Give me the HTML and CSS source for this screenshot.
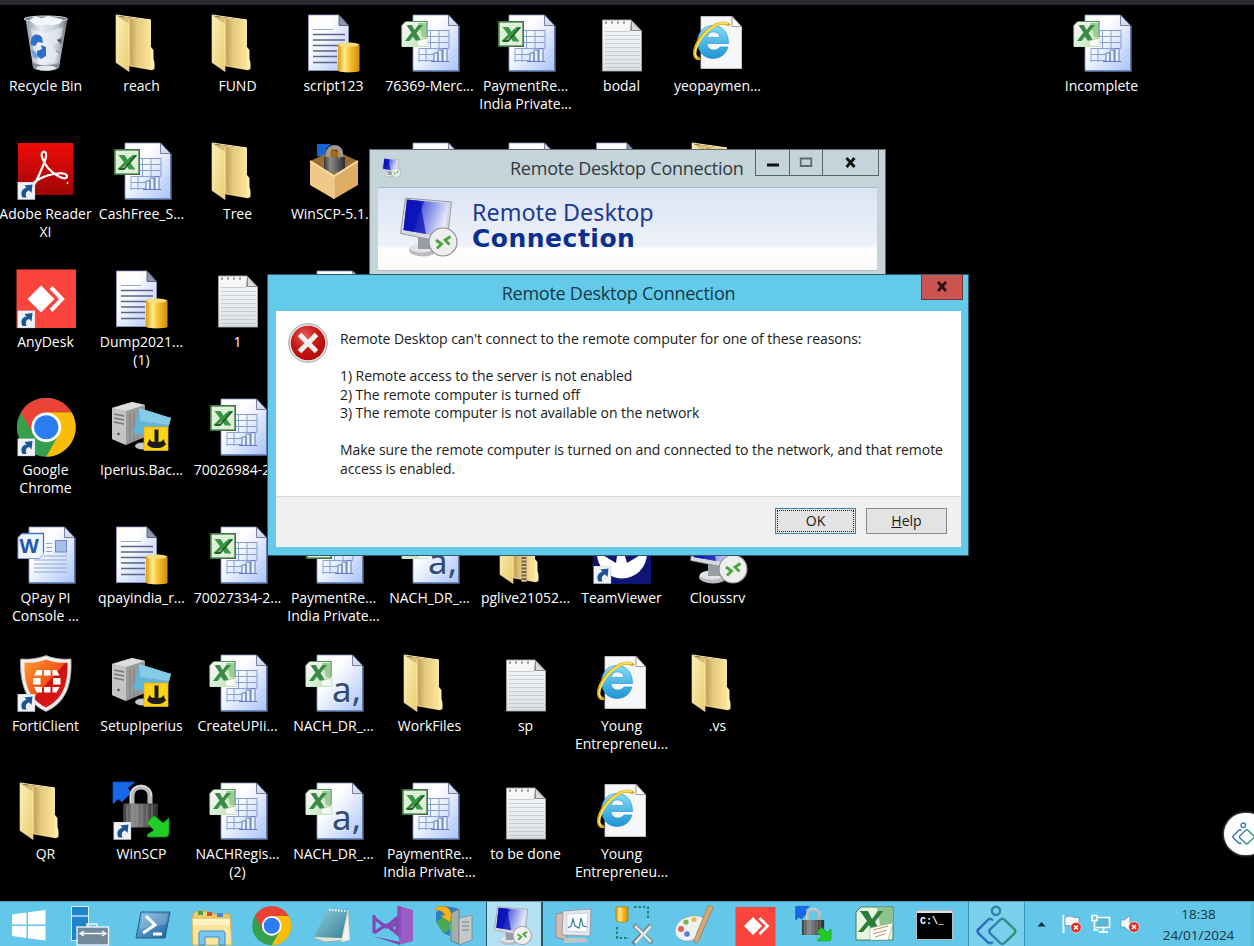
FILE: index.html
```html
<!DOCTYPE html>
<html lang="en">
<head>
<meta charset="utf-8">
<title>Remote Desktop Connection</title>
<link rel="stylesheet" href="styles.css">
</head>
<body>
<svg class="defs" aria-hidden="true">
  <defs>
    <linearGradient id="gPage" x1="0" y1="0" x2="1" y2="1"><stop offset=".35" stop-color="#fdfdff"/><stop offset="1" stop-color="#a9c4f3"/></linearGradient>
    <linearGradient id="gPaper" x1="0" y1="0" x2="0" y2="1"><stop offset="0" stop-color="#fafafa"/><stop offset="1" stop-color="#dcdfe3"/></linearGradient>
    <linearGradient id="gGold" x1="0" y1="0" x2="1" y2="0"><stop offset="0" stop-color="#e09a12"/><stop offset=".3" stop-color="#ffe98c"/><stop offset=".6" stop-color="#f8ba25"/><stop offset="1" stop-color="#d08c08"/></linearGradient>
    <linearGradient id="gFoldA" x1="0" y1="0" x2="1" y2="1"><stop offset="0" stop-color="#fdf0b6"/><stop offset="1" stop-color="#ecce76"/></linearGradient>
    <linearGradient id="gFoldB" x1="0" y1="0" x2="1" y2="0"><stop offset="0" stop-color="#c2a257"/><stop offset=".35" stop-color="#e5ca80"/><stop offset="1" stop-color="#f9e698"/></linearGradient>
    <linearGradient id="gRed" x1="0" y1="0" x2="0" y2="1"><stop offset="0" stop-color="#f00c08"/><stop offset="1" stop-color="#9d0505"/></linearGradient>
    <linearGradient id="gOrange" x1="0" y1="0" x2="1" y2="1"><stop offset="0" stop-color="#ff9b2e"/><stop offset=".5" stop-color="#f2541b"/><stop offset=".52" stop-color="#cf1010"/><stop offset="1" stop-color="#e02018"/></linearGradient>
    <linearGradient id="gScreen" x1="0" y1="0" x2="1" y2=".3"><stop offset="0" stop-color="#0f14a8"/><stop offset=".42" stop-color="#1b27d2"/><stop offset=".45" stop-color="#5b69de"/><stop offset="1" stop-color="#e6eafc"/></linearGradient>
    <linearGradient id="gBody" x1="0" y1="0" x2="1" y2="0"><stop offset="0" stop-color="#3a3a3a"/><stop offset=".3" stop-color="#8a8a8a"/><stop offset="1" stop-color="#2c2c2c"/></linearGradient>
    <linearGradient id="gIe" x1="0" y1="0" x2="0" y2="1"><stop offset="0" stop-color="#86ddf8"/><stop offset="1" stop-color="#1c93d2"/></linearGradient>
    <linearGradient id="gBadge" x1="0" y1="0" x2="1" y2="1"><stop offset="0" stop-color="#ffffff"/><stop offset="1" stop-color="#b9dcb2"/></linearGradient>
    <linearGradient id="gPs" x1="0" y1="0" x2="1" y2="1"><stop offset="0" stop-color="#7fc0e6"/><stop offset="1" stop-color="#1c5f9d"/></linearGradient>
    <linearGradient id="gBin" x1="0" y1="0" x2="1" y2="0"><stop offset="0" stop-color="#8f98a3"/><stop offset=".35" stop-color="#e9eef4"/><stop offset=".75" stop-color="#c3ccd6"/><stop offset="1" stop-color="#68707a"/></linearGradient>
    <radialGradient id="gErr" cx=".4" cy=".3" r=".75"><stop offset="0" stop-color="#e0645c"/><stop offset=".5" stop-color="#c81818"/><stop offset="1" stop-color="#b00808"/></radialGradient>
    <linearGradient id="gTeal" x1="0" y1="0" x2="1" y2="1"><stop offset="0" stop-color="#8fd0de"/><stop offset="1" stop-color="#3a7f96"/></linearGradient>
    <linearGradient id="gApp" gradientUnits="userSpaceOnUse" x1="0" y1="0" x2="42" y2="0"><stop offset="0" stop-color="#2f5cc4"/><stop offset=".5" stop-color="#2f86a8"/><stop offset="1" stop-color="#2a9a6a"/></linearGradient>
  </defs>

  <symbol id="shortcut" viewBox="0 0 18 18"><rect width="17.5" height="17.5" fill="#eef2f8" stroke="#b9c0ca" stroke-width=".6"/><path d="M5 15.500C2.500 11 4.500 6.500 9 6L7 3.500L15 2.500l-1 8.500-2.300-2.500C9 9 7.500 11 9 15.500z" fill="#1d5592"/></symbol>

  <symbol id="folder" viewBox="0 0 96 66">
    <path d="M23 6L57 10V48L60 50V59L56 60 34 56z" fill="url(#gFoldB)"/>
    <path d="M36 8.500L56.500 11V58.500L36 55z" fill="url(#gFoldB)"/>
    <path d="M22 5L35 14.500V61.500L22 52.500z" fill="url(#gFoldA)" stroke="#f8e8a8" stroke-width=".6"/>
    <path d="M22 5L57 10" stroke="#fff4c8" stroke-width="1.200"/>
    <path d="M57 37l2.500 3v11l1 1v7l-3.500 1.500z" fill="#fbeeb0"/>
  </symbol>
  <symbol id="zip" viewBox="0 0 96 66">
    <use href="#folder"/>
    <path d="M46 9v51" stroke="#80603a" stroke-width="5"/><path d="M46 9v51" stroke="#d8c9a8" stroke-width="5" stroke-dasharray="1.500 2"/>
  </symbol>

  <symbol id="textdoc" viewBox="0 0 96 66">
    <path d="M22.500 5H53l9.500 10.500V60.500h-40z" fill="url(#gPage)" stroke="#8f9ccb" stroke-width=".8"/>
    <path d="M53 5l9.500 10.500H53z" fill="#8b95ab" stroke="#39435c" stroke-width=".7"/>
    <path d="M27 19.500h20" stroke="#9aa3b5"/><path d="M27 24.500h32M27 30h32M27 35.500h31M27 41h24M27 46.500h24M27 52.500h24" stroke="#5a6684" stroke-width="1.300"/>
  </symbol>
  <symbol id="sql" viewBox="0 0 96 66">
    <use href="#textdoc"/>
    <path d="M52 35c0-3.500 21.500-3.500 21.500 0v25.500c0 2.500-21.500 2.500-21.500 0z" fill="url(#gGold)"/><ellipse cx="62.700" cy="34.800" rx="10.200" ry="2" fill="#f9dc86"/>
  </symbol>

  <symbol id="page" viewBox="0 0 96 66">
    <path d="M31 5H66.500L76.500 15.500V60.800H31z" fill="url(#gPage)" stroke="#7f95c8" stroke-width=".8"/>
    <path d="M31 61.300H77.200V16" fill="none" stroke="#46608f" stroke-width="1.200"/>
    <path d="M66.500 5L76.500 15.500h-10z" fill="#dcdcea" stroke="#5d6785" stroke-width=".8"/>
  </symbol>
  <symbol id="sheet" viewBox="0 0 96 66">
    <use href="#page"/>
    <path d="M45 20.500h22M45 26.500h22M45 32.500h22M37 38.500h30M37 44.500h18M37 50.500h18M37 38v14M44 38v14M48.500 20v18M57 20v18M67 20v18" fill="none" stroke="#86a0d2" stroke-width="1"/>
    <path d="M52 51V43h4v8M56 51V40h4v11M61 51V38.500h4V51M49 51.500h18" fill="#e9effc" stroke="#5f7cba" stroke-width="1"/>
  </symbol>
  <symbol id="xOld" viewBox="0 0 96 66">
    <rect x="20.800" y="11.800" width="24.400" height="24.400" fill="#dff0da" stroke="#3d7540" stroke-width="1.600"/>
    <path d="M24.500 17h6l3 4.500 5-4.500h5l-8 7 6 7.500h-6.500l-3-4.500-5 4.500h-4l7-7z" fill="#3b9444"/><path d="M25 31h5L42 17.500" stroke="#1d5f27" stroke-width="1.800" fill="none"/>
  </symbol>
  <symbol id="xNew" viewBox="0 0 96 66">
    <path d="M24 11.500H45V31l-4 5.500H20V15.500z" fill="url(#gBadge)" stroke="#cfe6ca" stroke-width="1"/>
    <path d="M24 11.500H45V27" fill="none" stroke="#4d9455" stroke-width="1.200"/>
    <path d="M36 13h8v16l-4-3z" fill="#9ccb9a"/>
    <path d="M24.500 15h5.500l2.500 5 4-5h4.500l-6.500 8 4.500 7.500h-5.500L31 26.500 27.500 31H23l6.500-8.500z" fill="#3b8c42"/>
    <path d="M34 32.500c4-3.500 7-3 12-4v8H37z" fill="#f4faf2" stroke="#b3d3ae" stroke-width=".6"/>
  </symbol>
  <symbol id="xlsOld" viewBox="0 0 96 66"><use href="#sheet"/><use href="#xOld"/></symbol>
  <symbol id="xlsNew" viewBox="0 0 96 66"><use href="#sheet"/><use href="#xNew"/></symbol>
  <symbol id="wordBase" viewBox="0 0 96 66">
    <use href="#page"/>
    <path d="M48 21.500h6M48 25.500h6M48 29.500h6M36 38h33M36 42h33M36 46h33M36 50h33M46 34h23" stroke="#8ca6d8" stroke-width="1"/><rect x="57.500" y="18.500" width="11" height="11.500" fill="#a9bee8" stroke="#6d8ac6"/>
    <path d="M24 11.500H45.500V32l-4 4.500H20V15.500z" fill="#f1f6fd" stroke="#7fa3d8"/>
    <path d="M24 11.500H45.500V30" fill="none" stroke="#3e76c0" stroke-width="1.300"/>
  </symbol>

  <symbol id="notepad" viewBox="0 0 96 66">
    <path d="M28.500 10H57L67.500 21V61h-39z" fill="url(#gPaper)" stroke="#a3a6aa" stroke-width=".9"/>
    <path d="M57 10L67.500 21H56z" fill="#8b8e92"/><path d="M58 11.500V20h8z" fill="#d7d9db"/>
    <path d="M31 25.500h35M31 29.500h35M31 33.500h35M31 37.500h35M31 41.500h35M31 45.500h35M31 49.500h35M31 53.500h35M31 57.500h35M31 21.500h25" stroke="#c3c8ce" stroke-width=".9"/>
    <path d="M31 12.500h24" stroke="#999" stroke-width="2.400" stroke-dasharray="2 4"/>
  </symbol>

  <symbol id="ie" viewBox="0 0 96 66">
    <path d="M31 6.500H62l9.500 10V58.500H31z" fill="#f6f7f9" stroke="#d4d6da" stroke-width=".8"/><path d="M62 6.500l9.500 10H62z" fill="#fff" stroke="#8d9095" stroke-width=".9"/>
    <path d="M43 15.500c9 0 15.500 6.500 15.500 18H37c.5 4 3 6.500 7 6.500 2.500 0 4.500-1 6-3h8c-2 7-7.500 11.500-15 11.500-9 0-15.500-6.500-15.500-16.500S34 15.500 43 15.500zM37.500 27.500h12.500c-.5-3.500-2.500-5.500-6.500-5.500s-5.500 2-6 5.500z" fill="url(#gIe)" stroke="#1f93cf" stroke-width=".6"/>
    <path d="M30 48.500C21 50 23 34 37 21 46 13 56 11 59.500 15.500" fill="none" stroke="#dca818" stroke-width="3.200"/><path d="M27 47.500C22.500 44 28 30 38 20.500 46 13.500 54 11.500 58 14" fill="none" stroke="#ffe25a" stroke-width="1.800"/>
  </symbol>

  <symbol id="bin" viewBox="0 0 96 66">
    <path d="M27.500 9L35 57c2 5 24 5 26 0L69.500 9z" fill="url(#gBin)"/>
    <path d="M26 9c2-4 42-4 43.500 0-2 3.500-42 3.500-43.500 0z" fill="#6f7781" stroke="#d8dee5"/>
    <path d="M31 10l6-3.500 7 1.500 6-2 7 1.500 8 2-3 4-8 2-8-1-8 1z" fill="#f4f6f9"/>
    <path d="M35 57c2 5 24 5 26 0l.8-5c-4 4-24 4-27.500 0z" fill="#858e98"/><ellipse cx="48" cy="58" rx="10" ry="2.500" fill="#e4e8ec"/>
    <path d="M33 19l14 4 18-6-3 15-7 4 5 8-4 9-14 2-5-9z" fill="#f2f6fa" opacity=".55"/><path d="M64 28l-5 2 4 4zM58 41l4 2" fill="#4b535d" stroke="#7c8590"/>
    <path d="M33 35c-1-8 3-12 8-10l3 2 1 6-5-1-3 4zM39 41l5-2-1-4 5 2v9l-5 3-4-3z" fill="#2f6fcc"/><path d="M35 47l-2-8 5 3 2 7z" fill="#6fa1e2"/>
  </symbol>

  <symbol id="adobe" viewBox="0 0 96 66">
    <rect x="20" y="5" width="55" height="52" fill="url(#gRed)"/>
    <path d="M34 51c-4-1 1-8 14-13 14-4.500 22-3 21 1-2 3.500-12-1-19-9C43 21 42 14 46 13.500c4.500 1 1 10-3 19-4 10-8 16-10 18z" fill="none" stroke="#fff" stroke-width="2.200"/><circle cx="69.500" cy="45" r=".9" fill="#fff"/>
    <use href="#shortcut" x="19.500" y="44" width="18" height="18"/>
  </symbol>

  <symbol id="anydesk" viewBox="0 0 96 66"><rect x="18.500" y="3.500" width="59.500" height="58.500" fill="#fb443b"/><path d="M43 19.500L56.500 33 43 46.500 29.500 33z" fill="#fff"/><path d="M52 21L64 33 52 45" fill="none" stroke="#fb443b" stroke-width="8"/><path d="M53 21.500L64 33 53 44.500" fill="none" stroke="#fff" stroke-width="4"/><use href="#shortcut" x="19.500" y="44.500" width="18" height="18"/></symbol>

  <symbol id="chromeLogo" viewBox="0 0 60 60">
    <circle cx="30" cy="30" r="29.700" fill="#34a04c"/>
    <path d="M4.300 15.200A29.700 29.700 0 0 1 55.700 15.200H30L17.200 37.400z" fill="#ea4335"/>
    <path d="M55.700 15.200A29.700 29.700 0 0 1 30 59.700L42.800 37.400 30 15.200z" fill="#fbbc05"/>
    <circle cx="30" cy="30" r="15" fill="#fff"/><circle cx="30" cy="30" r="12.200" fill="#2b7cf0"/>
  </symbol>
  <symbol id="chrome" viewBox="0 0 96 66"><use href="#chromeLogo" x="18.500" y="3.500" width="59.500" height="59.500"/><use href="#shortcut" x="19.500" y="44.500" width="18" height="18"/></symbol>

  <symbol id="iperius" viewBox="0 0 96 66">
    <path d="M18 14L38 8l13 3v32l-19 8-14-6z" fill="#9a9a9a"/><path d="M18 14l14 3v34l-14-6z" fill="#c4c4c4"/><path d="M18 14L38 8l13 3-19 6z" fill="#dedede"/>
    <path d="M20 20l10 2M20 24l10 2M20 28l10 2" stroke="#777" stroke-width="1.300"/><circle cx="24.500" cy="40" r="1.300" fill="#555"/><path d="M36 20v28M40 19v28M44 18v27" stroke="#7c7c7c" stroke-width=".8"/>
    <path d="M45 14L77 24 71 46 39 39z" fill="#62b4d8"/><path d="M45 14l32 10-2 7-29-4z" fill="#84cbe8"/>
    <ellipse cx="49" cy="52" rx="8" ry="3.500" fill="#c2c7cc"/>
    <rect x="50" y="33" width="24" height="23.500" fill="#fbd31a" stroke="#e0ac10" stroke-width=".8"/><path d="M60.500 35.500h4V48c3 0 4-1 5-3l1 2.500 1.500 3c-3 3-6 3.500-9.500 3.500s-7-.5-9.500-3.500l1.500-3 1-2.500c1 2 2 3 5 3z" fill="#1c1a12"/>
  </symbol>

  <symbol id="winscpBox" viewBox="0 0 96 66">
    <path d="M31 6h14l-5 5v9l-9-2z" fill="#1565d8"/>
    <path d="M24 23L48 12 72 23 48 38z" fill="#9a6d2e"/>
    <path d="M42 21v-6c0-8 13-8 13 0v6" fill="none" stroke="#9b9b9b" stroke-width="4"/><rect x="38" y="19" width="21" height="15" fill="url(#gBody)"/><path d="M44 21v-5c0-6 9-6 9 0v5" fill="none" stroke="#c98f35" stroke-width="1.200"/>
    <path d="M24 23L48 38V61L24 47z" fill="#efc988"/><path d="M72 23L48 38V61L72 47z" fill="#dfae66"/><path d="M24 23L48 38 72 23" fill="none" stroke="#f8dfa9" stroke-width="2"/><path d="M48 38V61" stroke="#f3d193"/>
  </symbol>

  <symbol id="lockArt" viewBox="0 0 60 58">
    <path d="M1 1H23L16 7l3 5-9 9-4-3-5 5z" fill="#1668e8" stroke="#0f4cb4" stroke-width=".8"/>
    <path d="M20 25V15c0-12 18-12 18 0v10" fill="none" stroke="#b8b8b8" stroke-width="5"/><path d="M18.500 25V15c0-13.500 21-13.500 21 0" fill="none" stroke="#e4e4e4" stroke-width="1.200"/>
    <rect x="11" y="22.500" width="35" height="24" rx="1" fill="url(#gBody)"/><path d="M15 24v21M20 24v21M25 24v21M30 24v21M35 24v21M40 24v21" stroke="#aaa" stroke-width=".6"/>
    <path d="M40 36q3-2 5 1l6 5 6-5v15q0 4-4 4H36l-1-2 7-5-7-7z" fill="#22cb26" stroke="#119a18" stroke-width=".8"/>
  </symbol>
  <symbol id="winscp" viewBox="0 0 96 66"><use href="#lockArt" x="18" y="3" width="60" height="58"/><use href="#shortcut" x="19.500" y="44" width="18" height="18"/></symbol>

  <symbol id="forti" viewBox="0 0 96 66">
    <path d="M48 5.500C57 9 65 9.500 73 9 74 33 69 52 48 61.500 27 52 22 33 22.500 9 31 9.500 39 9 48 5.500z" fill="#f3eded" stroke="#a3a3a3" stroke-width=".8"/>
    <path d="M48 9.500C56 12.500 63 13 69.500 12.800 70 33 66 48.500 48 57.500 30 48.500 26 33 26.500 12.800 33 13 40 12.500 48 9.500z" fill="url(#gOrange)"/>
    <g fill="#fff"><path d="M39 20h5v5.500h-8zM46 20h6.500v5.500H46zM54.500 20h4l3 5.500h-7zM35 28h7.500v6.500H35zM55 28h7.500v6.500H55zM36 37h8v5.500h-5zM46 37h6.500v5.500H46zM54.500 37h7l-3 5.500h-4z"/></g>
    <use href="#shortcut" x="19.500" y="44" width="18" height="18"/>
  </symbol>

  <symbol id="teamviewer" viewBox="0 0 96 66">
    <rect x="19" y="4" width="58" height="58" fill="#0e1575"/><circle cx="48" cy="31.500" r="25" fill="#fff"/><path d="M28 29l12-8-1 5h18l-1-5 12 8v3l-15 9-2-7H43l-1 7-15-9z" fill="#0e1575"/><path d="M46 33h5v8h-5z" fill="#fff"/><use href="#shortcut" x="19.500" y="44" width="18" height="18"/>
  </symbol>

  <symbol id="rdpArt" viewBox="0 0 58 61">
    <ellipse cx="23" cy="53" rx="14" ry="6.500" fill="#b9bbc0"/><ellipse cx="22" cy="51" rx="12" ry="4.500" fill="#e3e4e8"/><path d="M18 40l14 3-2 9H18z" fill="#9b9da4"/>
    <path d="M5.500 1L51.500 5 47 46 .500 36.500z" fill="#d7d9df" stroke="#85888f" stroke-width=".8"/>
    <path d="M7 2.500L48.500 6.500 44 40 3.500 33z" fill="url(#gScreen)"/><path d="M7 2.500L20 4 26 37 3.500 33z" fill="#0b12b4" opacity=".75"/>
    <circle cx="43" cy="45" r="14" fill="#eeeeec" stroke="#8f9190" stroke-width="1.200"/><path d="M36 43l5.500 4-4.500 4.500M50.500 39.500l-5.500 3.500 4.500 4.500" fill="none" stroke="#4aa640" stroke-width="2.800"/>
  </symbol>
  <symbol id="rdp" viewBox="0 0 96 66"><use href="#rdpArt" x="20" y="2" width="58" height="61"/></symbol>

  <symbol id="appLogo" viewBox="0 0 42 42">
    <g fill="none" stroke="url(#gApp)" stroke-width="2.500" stroke-linejoin="round" stroke-linecap="round"><circle cx="20.500" cy="6" r="4.200"/><path d="M16.500 38.500Q14.500 40 12.500 38.500L2.500 29Q.800 27 2.500 25L12.500 15Q14.500 13.300 16.500 15"/><path d="M25 15Q27 13.300 29 15L39.500 25Q41.200 27 39.500 29L29 39Q27 40.700 25 39L14.500 29Q12.800 27 14.500 25z"/></g>
  </symbol>
</svg>

<main class="desktop">
  <div class="icons">
    <div class="item c1 r1"><svg><use href="#bin"/></svg><span>Recycle Bin</span></div>
    <div class="item c2 r1"><svg><use href="#folder"/></svg><span>reach</span></div>
    <div class="item c3 r1"><svg><use href="#folder"/></svg><span>FUND</span></div>
    <div class="item c4 r1"><svg><use href="#sql"/></svg><span>script123</span></div>
    <div class="item c5 r1"><svg><use href="#xlsNew"/></svg><span>76369-Merc...</span></div>
    <div class="item c6 r1"><svg><use href="#xlsOld"/></svg><span>PaymentRe...<br>India Private...</span></div>
    <div class="item c7 r1"><svg><use href="#notepad"/></svg><span>bodal</span></div>
    <div class="item c8 r1"><svg><use href="#ie"/></svg><span>yeopaymen...</span></div>
    <div class="item c12 r1"><svg><use href="#xlsNew"/></svg><span>Incomplete</span></div>

    <div class="item c1 r2"><svg><use href="#adobe"/></svg><span>Adobe Reader<br>XI</span></div>
    <div class="item c2 r2"><svg><use href="#xlsOld"/></svg><span>CashFree_S...</span></div>
    <div class="item c3 r2"><svg><use href="#folder"/></svg><span>Tree</span></div>
    <div class="item c4 r2"><svg><use href="#winscpBox"/></svg><span>WinSCP-5.1...</span></div>
    <div class="item c5 r2"><svg><use href="#xlsOld"/></svg></div>
    <div class="item c6 r2"><svg><use href="#xlsOld"/></svg></div>
    <div class="item c7 r2"><svg><use href="#sql"/></svg></div>
    <div class="item c8 r2"><svg><use href="#folder"/></svg></div>

    <div class="item c1 r3"><svg><use href="#anydesk"/></svg><span>AnyDesk</span></div>
    <div class="item c2 r3"><svg><use href="#sql"/></svg><span>Dump2021...<br>(1)</span></div>
    <div class="item c3 r3"><svg><use href="#notepad"/></svg><span>1</span></div>
    <div class="item c4 r3"><svg><use href="#xlsOld"/></svg></div>

    <div class="item c1 r4"><svg><use href="#chrome"/></svg><span>Google<br>Chrome</span></div>
    <div class="item c2 r4"><svg><use href="#iperius"/></svg><span>Iperius.Bac...</span></div>
    <div class="item c3 r4"><svg><use href="#xlsOld"/></svg><span>70026984-2...</span></div>

    <div class="item c1 r5"><svg viewBox="0 0 96 66"><use href="#wordBase"/><text x="21.500" y="31" class="word-w">W</text></svg><span>QPay PI<br>Console ...</span></div>
    <div class="item c2 r5"><svg><use href="#sql"/></svg><span>qpayindia_r...</span></div>
    <div class="item c3 r5"><svg><use href="#xlsOld"/></svg><span>70027334-2...</span></div>
    <div class="item c4 r5"><svg><use href="#xlsOld"/></svg><span>PaymentRe...<br>India Private...</span></div>
    <div class="item c5 r5"><svg viewBox="0 0 96 66"><use href="#page"/><text x="46" y="52" class="csv-a">a,</text><use href="#xNew"/></svg><span>NACH_DR_...</span></div>
    <div class="item c6 r5"><svg><use href="#zip"/></svg><span>pglive21052...</span></div>
    <div class="item c7 r5"><svg><use href="#teamviewer"/></svg><span>TeamViewer</span></div>
    <div class="item c8 r5"><svg><use href="#rdp"/></svg><span>Cloussrv</span></div>

    <div class="item c1 r6"><svg><use href="#forti"/></svg><span>FortiClient</span></div>
    <div class="item c2 r6"><svg><use href="#iperius"/></svg><span>SetupIperius</span></div>
    <div class="item c3 r6"><svg><use href="#xlsNew"/></svg><span>CreateUPIi...</span></div>
    <div class="item c4 r6"><svg viewBox="0 0 96 66"><use href="#page"/><text x="46" y="52" class="csv-a">a,</text><use href="#xNew"/></svg><span>NACH_DR_...</span></div>
    <div class="item c5 r6"><svg><use href="#folder"/></svg><span>WorkFiles</span></div>
    <div class="item c6 r6"><svg><use href="#notepad"/></svg><span>sp</span></div>
    <div class="item c7 r6"><svg><use href="#ie"/></svg><span>Young<br>Entrepreneu...</span></div>
    <div class="item c8 r6"><svg><use href="#folder"/></svg><span>.vs</span></div>

    <div class="item c1 r7"><svg><use href="#folder"/></svg><span>QR</span></div>
    <div class="item c2 r7"><svg><use href="#winscp"/></svg><span>WinSCP</span></div>
    <div class="item c3 r7"><svg><use href="#xlsNew"/></svg><span>NACHRegis...<br>(2)</span></div>
    <div class="item c4 r7"><svg viewBox="0 0 96 66"><use href="#page"/><text x="46" y="52" class="csv-a">a,</text><use href="#xNew"/></svg><span>NACH_DR_...</span></div>
    <div class="item c5 r7"><svg><use href="#xlsOld"/></svg><span>PaymentRe...<br>India Private...</span></div>
    <div class="item c6 r7"><svg><use href="#notepad"/></svg><span>to be done</span></div>
    <div class="item c7 r7"><svg><use href="#ie"/></svg><span>Young<br>Entrepreneu...</span></div>
  </div>

  <section class="window back">
    <header class="bar">
      <svg class="mini" viewBox="0 0 58 61"><use href="#rdpArt"/></svg>
      <h2>Remote Desktop Connection</h2>
      <div class="controls">
        <button aria-label="Minimize"><svg viewBox="0 0 14 12"><path d="M1 8h12" stroke="#111" stroke-width="3"/></svg></button>
        <button aria-label="Maximize"><svg viewBox="0 0 14 12"><path d="M1.700 1.500h10.600v7.500H1.700z" fill="none" stroke="#5f6b70" stroke-width="1.800"/></svg></button>
        <button aria-label="Close"><svg viewBox="0 0 14 12"><path d="M2.500 1l8 9M10.500 1l-8 9" stroke="#111" stroke-width="2.800"/></svg></button>
      </div>
    </header>
    <div class="banner">
      <svg viewBox="0 0 58 61"><use href="#rdpArt"/></svg>
      <div class="brand"><span>Remote Desktop</span><strong>Connection</strong></div>
    </div>
  </section>

  <section class="window alert">
    <header class="bar">
      <h2>Remote Desktop Connection</h2>
      <button class="close" aria-label="Close"><svg viewBox="0 0 14 12"><path d="M3 1l8 9M11 1l-8 9" stroke="#2a0f0f" stroke-width="2.800"/></svg></button>
    </header>
    <div class="content">
      <svg class="error" viewBox="0 0 40 40"><circle cx="20" cy="20" r="19.300" fill="#e6e6e6" stroke="#8e8e8e" stroke-width=".8"/><circle cx="20" cy="20" r="17.300" fill="url(#gErr)"/><path d="M11.500 11.500L28.500 28.500M28.500 11.500L11.500 28.500" stroke="#f4f0ee" stroke-width="5"/></svg>
      <div class="message">
        <p>Remote Desktop can't connect to the remote computer for one of these reasons:</p>
        <p>1) Remote access to the server is not enabled<br>2) The remote computer is turned off<br>3) The remote computer is not available on the network</p>
        <p>Make sure the remote computer is turned on and connected to the network, and that remote<br>access is enabled.</p>
      </div>
    </div>
    <footer>
      <button class="btn default"><span>OK</span></button>
      <button class="btn"><span><u>H</u>elp</span></button>
    </footer>
  </section>

  <div class="bubble"><svg viewBox="0 0 42 42"><use href="#appLogo"/></svg></div>
</main>

<nav class="taskbar">
  <div class="apps">
    <svg viewBox="0 0 60 44"><path d="M12 12.500L26.500 10.500V22.500H12zM28 10.300L45.500 8V22.500H28zM12 24H26.500V36L12 34zM28 24H45.500V38.500L28 36.200z" fill="#fff"/></svg>
    <svg viewBox="0 0 60 44"><path d="M11.500 4.500h17v34h-17z" fill="#1f83c9" stroke="#d8f0fb"/><path d="M12 14h16" stroke="#d8f0fb" stroke-width="1.300"/><path d="M27 25v-3h10v3" fill="none" stroke="#e8f6fc" stroke-width="1.500"/><rect x="17" y="25" width="31.500" height="18" fill="#72889b" stroke="#f2f9fd" stroke-width="1.300"/><path d="M20 31.500h26M24 29l-4 2.500 4 2.500M42 29l4 2.500-4 2.500" fill="none" stroke="#fff" stroke-width="1.300"/></svg>
    <svg viewBox="0 0 60 44"><path d="M20 10h29l-5 26H15z" fill="url(#gPs)" stroke="#245e8d"/><path d="M21 12h26l-2 10-26 5z" fill="#fff" opacity=".18"/><path d="M25 14l9 9-12 8M32 32h9" fill="none" stroke="#fff" stroke-width="3"/></svg>
    <svg viewBox="0 0 60 44"><path d="M12 12l3-3h10l3 3h21v30H12z" fill="#f0cf6b" stroke="#d5a83c"/><path d="M17 9h5v4h-5z" fill="#4c9f49"/><path d="M26 10h5v4h-5z" fill="#d94b3a"/><path d="M36 11h6v4h-6z" fill="#4b86d8"/><path d="M11 16h38l2 27H12z" fill="#fae59a" stroke="#e0b955"/><path d="M12 17h37v6H12z" fill="#fdf3c5"/><path d="M18 43V31q0-2 3-2h20q3 0 3 2v12h-6v-8H24v8z" fill="#79c6f3" stroke="#3a8dcf"/></svg>
    <svg viewBox="0 0 60 44"><use href="#chromeLogo" x="11" y="4" width="39.500" height="39.500"/></svg>
    <svg viewBox="0 0 60 44"><path d="M29 7l19 2-2 29-22 2-11-4z" fill="#e1e5dc" stroke="#9b9f98" stroke-width=".7"/><path d="M27 7h20L41 36 13 35z" fill="url(#gTeal)"/><path d="M28 8l19 1" stroke="#f2fbfd" stroke-width="2" stroke-dasharray="1.500 1.500"/><path d="M47 9l2 29-9 2z" fill="#f4f4ea" stroke="#b5b8ae" stroke-width=".5"/></svg>
    <svg viewBox="0 0 60 44"><path d="M37 4l14 4v31l-14 4z" fill="#9a5cc6"/><path d="M37 4v29l-9-7 9-7M12 13v18M12 16l12 9 11-9v15l-11-8-12 8" fill="none" stroke="#8247b0" stroke-width="3.200"/><path d="M11 34l27 6v3z" fill="#8247b0"/><path d="M36 5h3v30h-3z" fill="#8c4fb8"/></svg>
    <svg viewBox="0 0 60 44"><path d="M14 10l9-6 12 2 2 8-10 2 1 18-7-3-7-12z" fill="#2a7fc0"/><path d="M14 20l7-5 8 3-3 11-5 2z" fill="#49a957"/><path d="M12 7c8-5 15-3 17 4l4-1-5 10-9-6 4-1c-2-4-6-5-11-6z" fill="#f4b41b" stroke="#d08a0b" stroke-width=".6"/><path d="M31 10l6-3v35l-8-3V12z" fill="#a6adb1" stroke="#666" stroke-width=".7"/><path d="M37 16l13-3v25l-13 5z" fill="#c5c8ca" stroke="#7d8183" stroke-width=".7"/><path d="M40 20h7M40 24h7M40 28h7" stroke="#7b7f83"/><path d="M31 17v4M31 25v4" stroke="#7ce024" stroke-width="2"/></svg>
    <div class="active"><svg viewBox="0 0 60 44"><use href="#rdpArt" x="12" y="4" width="38" height="40"/></svg></div>
    <svg viewBox="0 0 60 44"><path d="M13 12l10-2v28l-10-3z" fill="#d4b9ac" stroke="#8b7d78" stroke-width=".7"/><path d="M20 9l28-2-1 27-28-1z" fill="#e4e6ee" stroke="#8c909f" stroke-width=".8"/><path d="M24 12l21-1-1 19-20-1z" fill="#fbfdff" stroke="#b5c0cf" stroke-width=".6"/><path d="M25 26l3-2 2-7 2 7 4 2 2-10 2 8 4 1" fill="none" stroke="#3b7e9f" stroke-width="1.200"/><path d="M22 36h20l4 4-26 1z" fill="#c3c4ca"/></svg>
    <svg viewBox="0 0 60 44"><path d="M13 5h12v14q-6 2.500-12 0z" fill="url(#gGold)" stroke="#ad7410" stroke-width=".7"/><path d="M31 5h14v13M14 25v11h12" fill="none" stroke="#186b52" stroke-width="1.600" stroke-dasharray="2.500 2"/><path d="M31 23l18 18M48 23L30 42" stroke="#6f808a" stroke-width="4.500"/><path d="M32 24l16 16M48 24L32 41" stroke="#dfe7eb" stroke-width="2.600"/></svg>
    <svg viewBox="0 0 60 44"><path d="M12 29c0-10 12-17 24-15 9 2 8 10 2 12-5 1-3 5-5 9-4 7-21 5-21-6z" fill="#eef0f4" stroke="#8d98a6" stroke-width=".7"/><circle cx="18" cy="27" r="3" fill="#dd6454"/><circle cx="23" cy="20" r="2.600" fill="#7fb04e"/><circle cx="31" cy="17.500" r="2.600" fill="#e5b95c"/><circle cx="24" cy="32" r="2.800" fill="#5d7fd0"/><path d="M45 4c4-1 7 2 3 6L36 38c-3 5-6 3-4-2L42 11z" fill="#d3a876" stroke="#a17c56" stroke-width=".8"/></svg>
    <svg viewBox="0 0 60 44"><path d="M11.500 5h40v39h-40z" fill="#fb443b"/><path d="M29 15l9 9-9 9-9-9z" fill="#fff"/><path d="M35.500 16l8 8-8 8" fill="none" stroke="#fff" stroke-width="2.700"/></svg>
    <svg viewBox="0 0 60 44"><use href="#lockArt" x="11" y="3" width="38" height="38"/></svg>
    <svg viewBox="0 0 60 44"><path d="M17 5h32v33H12V10z" fill="#e7f3e3" stroke="#457e48"/><path d="M33 6h15v17H36z" fill="#8dc38c"/><path d="M16 9h8l4 8 6-8h5l-8 11 6 10h-8l-4-7-6 7h-5l9-11z" fill="#287f35"/><path d="M26 26l23-5-5 17H26z" fill="#fff" stroke="#95aa92" stroke-width=".6"/><path d="M29 28l15-4M29 32l14-4M31 35l10-3" stroke="#c6925a"/></svg>
    <svg viewBox="0 0 60 44"><path d="M12.500 8.500h36v29h-36z" fill="#000" stroke="#b7bcc0"/><path d="M13 10h35" stroke="#dde1e4" stroke-width="2"/><text x="16" y="22" class="cmd">C:\_</text></svg>
    <div class="active soft"><svg viewBox="0 0 60 44"><use href="#appLogo" x="11" y="3" width="41" height="41"/></svg></div>
  </div>
  <div class="tray">
    <svg class="caret" viewBox="0 0 10 6"><path d="M0 5.500L5 0l5 5.500z" fill="#172b36"/></svg>
    <svg class="status" viewBox="0 0 20 20"><path d="M1.500 1v18" stroke="#f5fbfe" stroke-width="2"/><path d="M3 3q5-2 8 0 3 1.500 6 0v9q-4 1-7 0-3-1-7 0z" fill="#eef7fb" stroke="#6a7b85" stroke-width=".7"/><circle cx="14" cy="13.500" r="5.300" fill="#d92f27" stroke="#fff" stroke-width=".6"/><path d="M12 11.500l4 4M16 11.500l-4 4" stroke="#fff" stroke-width="1.500"/></svg>
    <svg class="status" viewBox="0 0 20 20"><path d="M7 3.500h11.500v10H5" fill="#5cb5d5" stroke="#fff" stroke-width="1.600"/><path d="M12.500 14v3M8 18h9" stroke="#fff" stroke-width="1.800"/><path d="M1 1.500h5v5H1zM3.500 7v9h4" fill="none" stroke="#fff" stroke-width="1.600"/></svg>
    <svg class="status" viewBox="0 0 20 20"><path d="M1 6h3.500L10 1.500v16L4.500 13H1z" fill="#f5fafc" stroke="#728791" stroke-width=".7"/><circle cx="14" cy="13" r="5.300" fill="#d92f27" stroke="#fff" stroke-width=".6"/><path d="M12 11l4 4M16 11l-4 4" stroke="#fff" stroke-width="1.500"/></svg>
    <div class="clock"><span>18:38</span><span>24/01/2024</span></div>
  </div>
</nav>
</body>
</html>
```

FILE: styles.css
```css
* { box-sizing: border-box; }
body {
  margin: 0;
  width: 1254px;
  height: 946px;
  overflow: hidden;
  display: flex;
  flex-direction: column;
  background: #000;
  font-family: "Open Sans", "Noto Sans", sans-serif;
}
h2, p { margin: 0; font-weight: 400; }
button { font: inherit; padding: 0; margin: 0; }
.defs { position: absolute; width: 0; height: 0; }

.desktop {
  position: relative;
  flex: 0 0 901px;
  border-top: 5px solid #2a2b30;
  overflow: hidden;
}
.icons {
  display: grid;
  grid-template-columns: repeat(13, 96px);
  grid-template-rows: repeat(7, 128px);
  margin: 5px 0 0 -2px;
}
.item {
  display: flex;
  flex-direction: column;
  align-items: center;
  color: #fff;
  font-size: 14px;
  line-height: 18.4px;
  text-align: center;
  white-space: nowrap;
}
.item svg { width: 96px; height: 66px; flex: none; }
.item span { text-shadow: 0 1px 2px #000; margin: 1px 1px 0 0; }
.c1 { grid-column: 1; } .c2 { grid-column: 2; } .c3 { grid-column: 3; }
.c4 { grid-column: 4; } .c5 { grid-column: 5; } .c6 { grid-column: 6; }
.c7 { grid-column: 7; } .c8 { grid-column: 8; } .c12 { grid-column: 12; }
.r1 { grid-row: 1; } .r2 { grid-row: 2; } .r3 { grid-row: 3; } .r4 { grid-row: 4; }
.r5 { grid-row: 5; } .r6 { grid-row: 6; } .r7 { grid-row: 7; }
.csv-a { font: 35px "Noto Sans", sans-serif; fill: #344a76; }
.word-w { font: bold 20px "Noto Sans", sans-serif; fill: #2059ab; }

.window { position: absolute; display: flex; flex-direction: column; }
.window h2 { font-size: 18px; line-height: 24px; letter-spacing: -.25px; white-space: nowrap; }
.back {
  left: 369px; top: 144px; width: 517px; height: 135px;
  background: #c4d4da;
  border: 1px solid #5f6c72;
  border-bottom: 0;
  padding: 0 8px;
}
.back .bar { height: 37px; flex: none; display: flex; align-items: flex-start; }
.back .mini { width: 19px; height: 20px; margin: 8px 0 0 4px; }
.back h2 { margin: 6px 0 0 109px; color: #2f3b40; }
.controls {
  display: flex;
  margin: 0 -2px 0 auto;
  border: solid #58646a;
  border-width: 0 1px 1px;
  height: 26px;
}
.controls button {
  width: 34px;
  border: 0;
  border-right: 1px solid #58646a;
  background: transparent;
  display: flex;
  align-items: center;
  justify-content: center;
}
.controls button:nth-child(2) { width: 33px; }
.controls button:last-child { width: 55px; border-right: 0; }
.controls svg, .close svg { width: 14px; height: 12px; }
.banner {
  height: 84px;
  border-top: 1px solid #a9bcc6;
  border-bottom: 1px solid #b5b8bc;
  background: linear-gradient(#dbe4f4 0, #eef2fa 58px, #fdfdfe 60px, #fbfbfc 100%);
  display: flex;
  align-items: flex-start;
  gap: 14px;
  padding: 9px 22px;
}
.banner svg { width: 58px; height: 61px; flex: none; }
.brand { display: flex; flex-direction: column; color: #1a3a94; font-family: "Noto Sans", sans-serif; font-size: 23.3px; line-height: 27px; padding-top: 2px; }
.brand strong { color: #0a2f8c; font-family: "DejaVu Sans", sans-serif; font-size: 25px; letter-spacing: .5px; line-height: 26px; }

.alert {
  left: 267px; top: 269px; width: 702px; height: 282px;
  background: #64cae9;
  border: 1px solid #2d5a6e;
  padding: 0 7px 8px 8px;
}
.alert .bar { height: 36px; flex: none; display: grid; grid-template-columns: 1fr auto 1fr; align-items: start; }
.alert h2 { grid-column: 2; margin-top: 6px; color: #0e3a4a; }
.close {
  justify-self: end;
  width: 42px; height: 25px;
  margin-right: -2px;
  background: #cb5450;
  border: 1px solid #7c3338;
  border-top: 0;
  display: flex;
  align-items: center;
  justify-content: center;
}
.content {
  height: 185px;
  flex: none;
  background: #fff;
  display: flex;
  gap: 12px;
  padding: 12px 12px 0;
}
.error { width: 40px; height: 40px; flex: none; }
.message { display: flex; flex-direction: column; gap: 18.5px; padding-top: 7px; color: #1a1a1a; font-size: 14px; letter-spacing: -.06px; line-height: 18.5px; white-space: nowrap; }
.alert footer {
  flex: 1;
  background: #f0f0f0;
  border-top: 1px solid #dcdcdc;
  display: flex;
  justify-content: flex-end;
  align-items: flex-start;
  gap: 10px;
  padding: 11px 14px;
}
.btn {
  width: 81px; height: 26px;
  border: 1px solid #8a8a8a;
  background: #e3e3e3;
  padding: 1px;
  color: #1a1a1a;
  font-size: 14px;
  line-height: 22px;
}
.btn span { display: block; height: 22px; }
.default { border: 1px solid #3c84b3; }
.default span { border: 1px dotted #222; line-height: 20px; }

.bubble {
  position: absolute;
  right: -14px; top: 808px;
  width: 44px; height: 42px;
  border-radius: 21px;
  background: #fff;
  box-shadow: 0 0 3px #aaa;
  padding: 9px 0 0 8px;
}
.bubble svg { width: 23px; height: 23px; display: block; }

.taskbar {
  flex: 1;
  background: #62c7e8;
  border-top: 1px solid #4f9db8;
  display: flex;
  justify-content: space-between;
}
.apps { display: grid; grid-template-columns: repeat(17, 60.3px); height: 44px; }
.apps svg { width: 60px; height: 44px; display: block; }
.active { background: linear-gradient(90deg, transparent 4px, #2b5565 4px, #2b5565 5px, #b3e1f1 5px, #b3e1f1 59px, #2b5565 59px); }
.soft { background: linear-gradient(90deg, transparent 3px, #3993b0 3px, #3993b0 4px, #7ad0ec 4px, #7ad0ec 59px, #3993b0 59px); }
.cmd { font: bold 10px "Liberation Mono", monospace; fill: #fff; }
.tray { width: 217px; display: flex; align-items: center; padding-right: 3px; border-right: 3px solid #58b9d9; }
.caret { width: 9px; height: 5px; margin-right: 16px; }
.status { width: 20px; height: 20px; margin-right: 9px; }
.clock { flex: 1; display: flex; flex-direction: column; align-items: center; color: #12333f; font-size: 13.5px; line-height: 21px; white-space: nowrap; margin-top: 1px; }
```
